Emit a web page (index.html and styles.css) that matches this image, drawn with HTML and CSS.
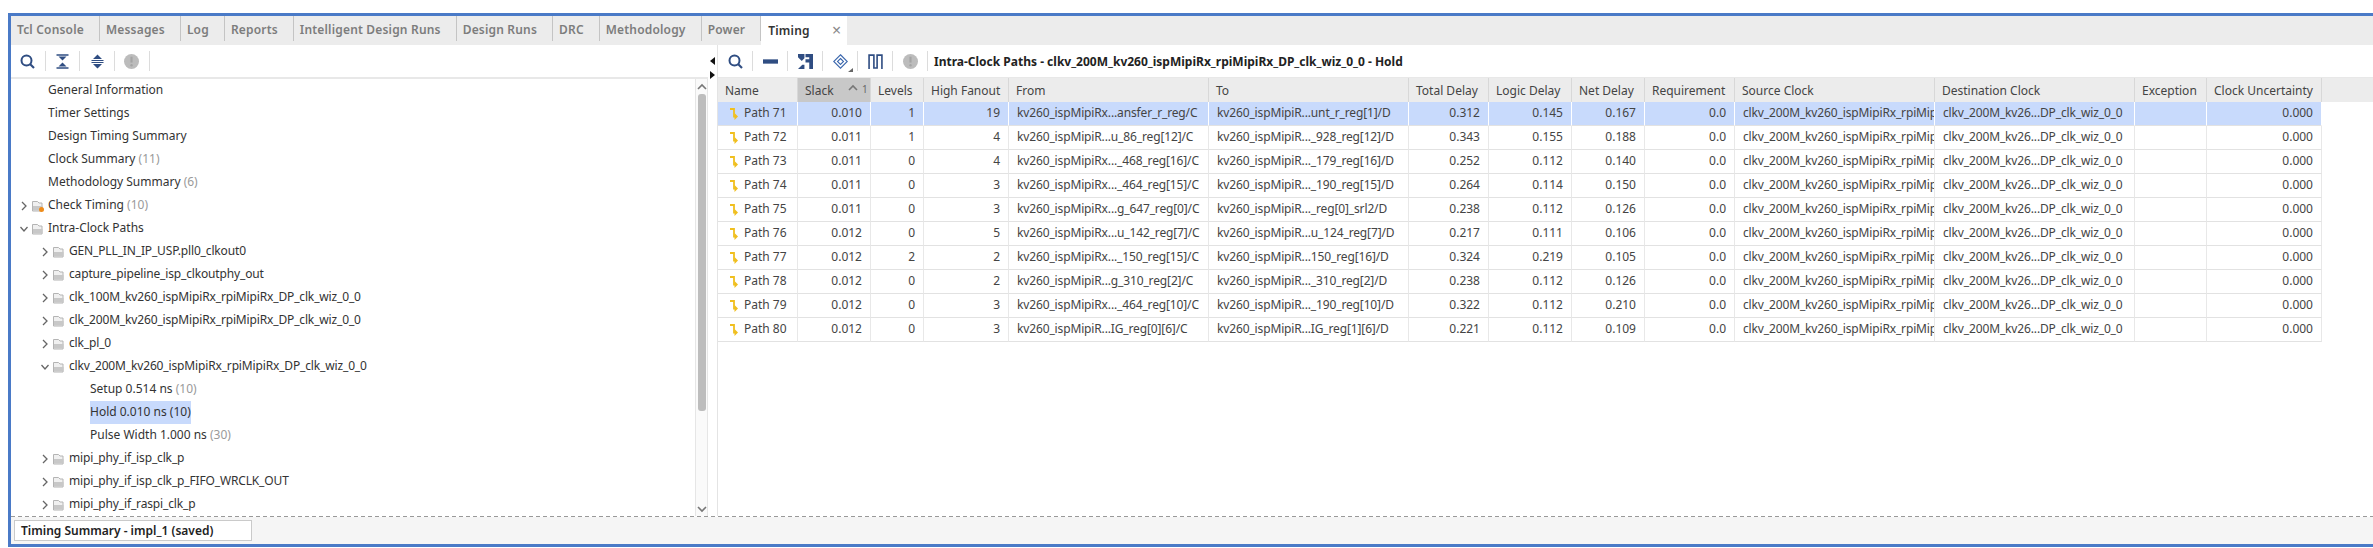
FILE: index.html
```html
<!DOCTYPE html>
<html lang="en">
<head>
    <meta charset="UTF-8">
    <title>Timing Summary - impl_1</title>
    <link rel="stylesheet" href="styles.css">
</head>
<body>
<svg class="defs">
    <defs>
        <symbol id="i-search" viewBox="0 0 15 15"><circle cx="6.500" cy="6.500" r="5" fill="none" stroke="#2f4d82" stroke-width="2"/><path d="M10 10l4 4" stroke="#2f4d82" stroke-width="2.200"/></symbol>
        <symbol id="i-collapse" viewBox="0 0 14 15"><path d="M1 1h12M1 14h12" stroke="#2f4d82" stroke-width="1.600"/><path d="M3 2.500h8L7 6.500zM3 12.500h8L7 8.500z" fill="#2f4d82"/></symbol>
        <symbol id="i-expand" viewBox="0 0 14 15"><path d="M2.500 5L7 .5 11.500 5zM2.500 10L7 14.500 11.500 10z" fill="#2f4d82"/><path d="M1 6.500h12M1 8.500h12" stroke="#2f4d82" stroke-width="1.200"/></symbol>
        <symbol id="i-warn" viewBox="0 0 14 14"><circle cx="7" cy="7" r="7" fill="#bcbcbc"/><path d="M7 2.500v5.500" stroke="#a4a4a4" stroke-width="2"/><circle cx="7" cy="10.500" r="1.100" fill="#a4a4a4"/></symbol>
        <symbol id="i-minus" viewBox="0 0 14 14"><rect x="0" y="5" width="14" height="4" fill="#2f4d82"/></symbol>
        <symbol id="i-route" viewBox="0 0 14 14"><path d="M0 0h6v4L3.500 6.500 0 3zM0 14l4-4 2 0v4zM10.500 0H14v14h-3.500V8H7V5h3.500V3H7V0z" fill="#2f4d82"/></symbol>
        <symbol id="i-diamond" viewBox="0 0 14 14"><path d="M7 .7L13.300 7 7 13.300.7 7z" fill="none" stroke="#3b67ad"/><path d="M7 4.200L9.800 7 7 9.800 4.200 7z" fill="none" stroke="#3b67ad"/></symbol>
        <symbol id="i-wave" viewBox="0 0 14 14"><path d="M1 14V1h4.500v12h3V1H13v13" fill="none" stroke="#2f4d82" stroke-width="1.500"/></symbol>
        <symbol id="i-path" viewBox="0 0 8 12"><path d="M0 1h4v7.500h1.500" fill="none" stroke="#f0bf1f" stroke-width="1.800"/><path d="M4.500 5L8 8.500 4.500 12z" fill="#f0bf1f"/></symbol>
        <symbol id="i-folder" viewBox="0 0 12 12"><path d="M.5 1.500h5l1.500 1.500h3v8h-9.500z" fill="#f0f0f0" stroke="#b4b4b4"/><rect x="1" y="6" width="9.500" height="4.500" fill="#c8c8c8"/></symbol>
        <symbol id="i-open" viewBox="0 0 10 10"><path d="M3 1l4 4-4 4" fill="none" stroke="#666" stroke-width="1.300"/></symbol>
        <symbol id="i-down" viewBox="0 0 10 10"><path d="M1.500 3l3.500 4 3.500-4" fill="none" stroke="#666" stroke-width="1.300"/></symbol>
        <symbol id="i-up" viewBox="0 0 10 10"><path d="M1 7l4-4 4 4" fill="none" stroke="#777" stroke-width="1.600"/></symbol>
        <symbol id="i-dn" viewBox="0 0 10 10"><path d="M1 3l4 4 4-4" fill="none" stroke="#777" stroke-width="1.600"/></symbol>
    </defs>
</svg>

<div class="window">
    <div class="tabs">
        <div class="tab">Tcl Console</div>
        <div class="tab">Messages</div>
        <div class="tab">Log</div>
        <div class="tab">Reports</div>
        <div class="tab">Intelligent Design Runs</div>
        <div class="tab">Design Runs</div>
        <div class="tab">DRC</div>
        <div class="tab">Methodology</div>
        <div class="tab">Power</div>
        <div class="tab tab-active">Timing <span class="tab-close">×</span></div>
    </div>

    <div class="panes">
        <div class="left-pane">
            <div class="toolbar">
                <span class="tool"><svg class="ico"><use href="#i-search"/></svg></span>
                <span class="tool"><svg class="ico"><use href="#i-collapse"/></svg></span>
                <span class="tool"><svg class="ico"><use href="#i-expand"/></svg></span>
                <span class="tool"><svg class="ico"><use href="#i-warn"/></svg></span>
            </div>
            <div class="tree-wrap">
                <ul class="tree">
                    <li class="lvl1"><span class="label">General Information</span></li>
                    <li class="lvl1"><span class="label">Timer Settings</span></li>
                    <li class="lvl1"><span class="label">Design Timing Summary</span></li>
                    <li class="lvl1"><span class="label">Clock Summary <em>(11)</em></span></li>
                    <li class="lvl1"><span class="label">Methodology Summary <em>(6)</em></span></li>
                    <li class="lvl0"><svg class="arrow"><use href="#i-open"/></svg><span class="fold fold-warn"><svg class="folder"><use href="#i-folder"/></svg></span><span class="label">Check Timing <em>(10)</em></span></li>
                    <li class="lvl0"><svg class="arrow"><use href="#i-down"/></svg><span class="fold"><svg class="folder"><use href="#i-folder"/></svg></span><span class="label">Intra-Clock Paths</span></li>
                    <li class="lvl2"><svg class="arrow"><use href="#i-open"/></svg><span class="fold"><svg class="folder"><use href="#i-folder"/></svg></span><span class="label">GEN_PLL_IN_IP_USP.pll0_clkout0</span></li>
                    <li class="lvl2"><svg class="arrow"><use href="#i-open"/></svg><span class="fold"><svg class="folder"><use href="#i-folder"/></svg></span><span class="label">capture_pipeline_isp_clkoutphy_out</span></li>
                    <li class="lvl2"><svg class="arrow"><use href="#i-open"/></svg><span class="fold"><svg class="folder"><use href="#i-folder"/></svg></span><span class="label">clk_100M_kv260_ispMipiRx_rpiMipiRx_DP_clk_wiz_0_0</span></li>
                    <li class="lvl2"><svg class="arrow"><use href="#i-open"/></svg><span class="fold"><svg class="folder"><use href="#i-folder"/></svg></span><span class="label">clk_200M_kv260_ispMipiRx_rpiMipiRx_DP_clk_wiz_0_0</span></li>
                    <li class="lvl2"><svg class="arrow"><use href="#i-open"/></svg><span class="fold"><svg class="folder"><use href="#i-folder"/></svg></span><span class="label">clk_pl_0</span></li>
                    <li class="lvl2"><svg class="arrow"><use href="#i-down"/></svg><span class="fold"><svg class="folder"><use href="#i-folder"/></svg></span><span class="label">clkv_200M_kv260_ispMipiRx_rpiMipiRx_DP_clk_wiz_0_0</span></li>
                    <li class="lvl3"><span class="label">Setup 0.514 ns <em>(10)</em></span></li>
                    <li class="lvl3"><span class="label label-sel">Hold 0.010 ns (10)</span></li>
                    <li class="lvl3"><span class="label">Pulse Width 1.000 ns <em>(30)</em></span></li>
                    <li class="lvl2"><svg class="arrow"><use href="#i-open"/></svg><span class="fold"><svg class="folder"><use href="#i-folder"/></svg></span><span class="label">mipi_phy_if_isp_clk_p</span></li>
                    <li class="lvl2"><svg class="arrow"><use href="#i-open"/></svg><span class="fold"><svg class="folder"><use href="#i-folder"/></svg></span><span class="label">mipi_phy_if_isp_clk_p_FIFO_WRCLK_OUT</span></li>
                    <li class="lvl2"><svg class="arrow"><use href="#i-open"/></svg><span class="fold"><svg class="folder"><use href="#i-folder"/></svg></span><span class="label">mipi_phy_if_raspi_clk_p</span></li>
                </ul>
                <div class="scrollbar">
                    <svg class="sb-arrow"><use href="#i-up"/></svg>
                    <div class="sb-track"><div class="sb-thumb"></div></div>
                    <svg class="sb-arrow"><use href="#i-dn"/></svg>
                </div>
            </div>
        </div>

        <div class="splitter">
            <span class="split-left"></span>
            <span class="split-right"></span>
        </div>

        <div class="right-pane">
            <div class="toolbar">
                <span class="tool"><svg class="ico"><use href="#i-search"/></svg></span>
                <span class="tool"><svg class="ico"><use href="#i-minus"/></svg></span>
                <span class="tool"><svg class="ico"><use href="#i-route"/></svg></span>
                <span class="tool tool-corner"><svg class="ico"><use href="#i-diamond"/></svg></span>
                <span class="tool"><svg class="ico"><use href="#i-wave"/></svg></span>
                <span class="tool"><svg class="ico"><use href="#i-warn"/></svg></span>
                <span class="table-title">Intra-Clock Paths - clkv_200M_kv260_ispMipiRx_rpiMipiRx_DP_clk_wiz_0_0 - Hold</span>
            </div>
            <table class="paths">
                <colgroup>
                    <col class="c-name"><col class="c-slack"><col class="c-levels"><col class="c-fanout">
                    <col class="c-from"><col class="c-to"><col class="c-total"><col class="c-logic">
                    <col class="c-net"><col class="c-req"><col class="c-src"><col class="c-dst">
                    <col class="c-exc"><col class="c-unc"><col>
                </colgroup>
                <thead>
                    <tr>
                        <th>Name</th>
                        <th class="sorted">Slack <span class="sort"><svg class="sort-ico"><use href="#i-up"/></svg><sup>1</sup></span></th>
                        <th>Levels</th><th>High Fanout</th><th>From</th><th>To</th><th>Total Delay</th><th>Logic Delay</th><th>Net Delay</th><th>Requirement</th><th>Source Clock</th><th>Destination Clock</th><th>Exception</th><th>Clock Uncertainty</th><th class="filler"></th>
                    </tr>
                </thead>
                <tbody id="rows"></tbody>
            </table>
        </div>
    </div>

    <div class="dash"></div>
    <div class="status-row">
        <div class="status-tab">Timing Summary - impl_1 (saved)</div>
    </div>
</div>

<script>
    const dados = [
        ["Path 71", "0.010", 1, 19, "kv260_ispMipiRx...ansfer_r_reg/C", "kv260_ispMipiR...unt_r_reg[1]/D", "0.312", "0.145", "0.167"],
        ["Path 72", "0.011", 1, 4, "kv260_ispMipiR...u_86_reg[12]/C", "kv260_ispMipiR..._928_reg[12]/D", "0.343", "0.155", "0.188"],
        ["Path 73", "0.011", 0, 4, "kv260_ispMipiRx..._468_reg[16]/C", "kv260_ispMipiR..._179_reg[16]/D", "0.252", "0.112", "0.140"],
        ["Path 74", "0.011", 0, 3, "kv260_ispMipiRx..._464_reg[15]/C", "kv260_ispMipiR..._190_reg[15]/D", "0.264", "0.114", "0.150"],
        ["Path 75", "0.011", 0, 3, "kv260_ispMipiRx...g_647_reg[0]/C", "kv260_ispMipiR..._reg[0]_srl2/D", "0.238", "0.112", "0.126"],
        ["Path 76", "0.012", 0, 5, "kv260_ispMipiRx...u_142_reg[7]/C", "kv260_ispMipiR...u_124_reg[7]/D", "0.217", "0.111", "0.106"],
        ["Path 77", "0.012", 2, 2, "kv260_ispMipiRx..._150_reg[15]/C", "kv260_ispMipiR...150_reg[16]/D", "0.324", "0.219", "0.105"],
        ["Path 78", "0.012", 0, 2, "kv260_ispMipiR...g_310_reg[2]/C", "kv260_ispMipiR..._310_reg[2]/D", "0.238", "0.112", "0.126"],
        ["Path 79", "0.012", 0, 3, "kv260_ispMipiRx..._464_reg[10]/C", "kv260_ispMipiR..._190_reg[10]/D", "0.322", "0.112", "0.210"],
        ["Path 80", "0.012", 0, 3, "kv260_ispMipiR...IG_reg[0][6]/C", "kv260_ispMipiR...IG_reg[1][6]/D", "0.221", "0.112", "0.109"]
    ];
    const corpo = document.getElementById("rows");
    dados.forEach(function(d, i) {
        const tr = document.createElement("tr");
        if (i === 0) tr.className = "row-sel";
        tr.innerHTML =
            `<td><svg class="path-ico"><use href="#i-path"/></svg>${d[0]}</td>` +
            `<td class="num">${d[1]}</td><td class="num">${d[2]}</td><td class="num">${d[3]}</td>` +
            `<td>${d[4]}</td><td>${d[5]}</td>` +
            `<td class="num">${d[6]}</td><td class="num">${d[7]}</td><td class="num">${d[8]}</td>` +
            `<td class="num">0.0</td>` +
            `<td class="clip">clkv_200M_kv260_ispMipiRx_rpiMip</td>` +
            `<td>clkv_200M_kv26...DP_clk_wiz_0_0</td><td></td><td class="num">0.000</td>`;
        corpo.appendChild(tr);
    });
</script>
</body>
</html>
```

FILE: styles.css
```css
html, body {
    margin: 0;
    padding: 0;
    height: 548px;
    background: #fff;
    overflow: hidden;
}
body {
    font-family: "Noto Sans", "Open Sans", sans-serif;
    font-size: 12px;
    color: #333;
    padding-top: 13px;
    box-sizing: border-box;
}
.defs {
    width: 0;
    height: 0;
    display: block;
}
.window {
    height: 534px;
    margin-left: 8px;
    border-top: 3px solid #4a7ac7;
    border-left: 3px solid #4a7ac7;
    border-bottom: 3px solid #4a7ac7;
    box-sizing: border-box;
    display: flex;
    flex-direction: column;
    background: #fff;
}
.tabs {
    height: 29px;
    flex: none;
    background: #ececec;
    display: flex;
}
.tab {
    height: 25px;
    line-height: 27px;
    padding: 0 15px 0 6px;
    border-right: 1px solid #c4c4c4;
    color: #7d7d7d;
    font-weight: 600;
    letter-spacing: 0.18px;
    white-space: nowrap;
}
.tab-active {
    height: 29px;
    line-height: 28px;
    background: #fff;
    color: #333;
    border-right: none;
    padding: 0 0 0 7px;
    width: 79px;
}
.tab-close {
    color: #8a8a8a;
    font-weight: 400;
    font-size: 16px;
    margin-left: 19px;
    vertical-align: -1px;
}
.panes {
    height: 471px;
    flex: none;
    display: flex;
}
.left-pane {
    width: 697px;
    flex: none;
    display: flex;
    flex-direction: column;
}
.toolbar {
    height: 32px;
    flex: none;
    display: flex;
    align-items: center;
    border-bottom: 2px solid #e8e8e8;
}
.tool {
    width: 34.7px;
    height: 20px;
    display: flex;
    align-items: center;
    justify-content: center;
    border-right: 1px solid #dcdcdc;
    box-sizing: border-box;
    position: relative;
    flex: none;
}
.right-pane .toolbar {
    border-bottom: 1px solid #e8e8e8;
}
.right-pane .tool {
    width: 35px;
}
.ico {
    width: 15px;
    height: 15px;
}
.tool-corner::after {
    content: "";
    position: absolute;
    right: 4px;
    bottom: -1px;
    border-left: 5px solid transparent;
    border-bottom: 4px solid #666;
}
.tree-wrap {
    flex: 1;
    display: flex;
    min-height: 0;
}
.tree {
    list-style: none;
    margin: 0;
    padding: 0;
    flex: 1;
    overflow: hidden;
}
.tree li {
    height: 23px;
    display: flex;
    align-items: center;
    white-space: nowrap;
}
.lvl0 { padding-left: 8px; }
.lvl1 { padding-left: 37px; }
.lvl2 { padding-left: 29px; letter-spacing: -0.15px; }
.lvl3 { padding-left: 79px; }
.arrow {
    width: 10px;
    height: 10px;
    flex: none;
    margin-right: 3px;
}
.fold {
    width: 12px;
    height: 12px;
    margin-right: 4px;
    position: relative;
    flex: none;
}
.folder {
    width: 12px;
    height: 12px;
    display: block;
}
.fold-warn::after {
    content: "";
    position: absolute;
    right: 0;
    bottom: 0;
    width: 5px;
    height: 5px;
    border-radius: 50%;
    background: #ef8c1a;
}
.label {
    display: block;
    line-height: 21px;
    padding-bottom: 2px;
}
.label em {
    font-style: normal;
    color: #9a9a9a;
}
.label-sel {
    background: #c8dafc;
}
.scrollbar {
    width: 13px;
    flex: none;
    box-sizing: border-box;
    border-left: 1px solid #e6e6e6;
    border-right: 1px solid #e6e6e6;
    background: #fafafa;
    display: flex;
    flex-direction: column;
    align-items: center;
}
.sb-arrow {
    width: 10px;
    height: 10px;
    flex: none;
    margin: 3px 0 2px;
}
.sb-track {
    flex: 1;
}
.sb-thumb {
    height: 317px;
    width: 8px;
    background: #bdbdbd;
    border-radius: 3px;
}
.splitter {
    width: 9px;
    flex: none;
    position: relative;
}
.split-left, .split-right {
    position: absolute;
    left: 2px;
    border-top: 4px solid transparent;
    border-bottom: 4px solid transparent;
}
.split-left {
    top: 12px;
    border-right: 5px solid #111;
}
.split-right {
    top: 26px;
    border-left: 5px solid #111;
}
.right-pane {
    flex: 1;
    min-width: 0;
    border-left: 1px solid #e4e4e4;
    overflow: hidden;
}
.table-title {
    font-weight: 700;
    color: #222;
    margin-left: 6px;
    white-space: nowrap;
}
.paths {
    border-collapse: separate;
    border-spacing: 0;
    table-layout: fixed;
    width: 1655px;
}
.c-name { width: 80px; }
.c-slack { width: 73px; }
.c-levels { width: 53px; }
.c-fanout { width: 85px; }
.c-from { width: 200px; }
.c-to { width: 200px; }
.c-total { width: 80px; }
.c-logic { width: 83px; }
.c-net { width: 73px; }
.c-req { width: 90px; }
.c-src { width: 200px; }
.c-dst { width: 200px; }
.c-exc { width: 72px; }
.c-unc { width: 115px; }
.paths th {
    height: 24px;
    background: #ececec;
    color: #444;
    font-weight: 400;
    text-align: left;
    padding: 0 0 0 7px;
    border-right: 1px solid #d8d8d8;
    box-sizing: border-box;
    overflow: hidden;
    white-space: nowrap;
    position: relative;
}
.paths th.filler {
    border-right: none;
}
.paths th.sorted {
    background: #c8c8c8;
}
.sort {
    position: absolute;
    left: 50px;
    top: 5px;
    display: flex;
    color: #666;
    font-size: 10px;
    line-height: 12px;
}
.sort sup {
    vertical-align: baseline;
    font-size: 10px;
    margin-left: 4px;
}
.sort-ico {
    width: 10px;
    height: 10px;
}
.paths td {
    height: 24px;
    padding: 0 8px 2px;
    color: #444;
    letter-spacing: -0.14px;
    border-right: 1px solid #e8e8e8;
    border-bottom: 1px solid #e2e2e2;
    box-sizing: border-box;
    white-space: nowrap;
    overflow: hidden;
}
.paths td:first-child {
    padding-left: 12px;
    letter-spacing: 0;
}
.paths .num {
    text-align: right;
    letter-spacing: 0;
}
.paths .clip {
    padding-right: 0;
}
.row-sel td {
    background: #c8dafc;
    border-right-color: #fff;
}
.path-ico {
    width: 8px;
    height: 12px;
    margin-right: 6px;
    vertical-align: -3px;
}
.dash {
    height: 1px;
    flex: none;
    background: repeating-linear-gradient(to right, #999 0 4px, transparent 4px 7px);
}
.status-row {
    height: 27px;
    flex: none;
    padding: 3px 0 0 3px;
    box-sizing: border-box;
    background: #f5f5f5;
}
.status-tab {
    width: 238px;
    height: 21px;
    line-height: 19px;
    background: #fff;
    border: 1px solid #cacaca;
    box-sizing: border-box;
    padding-left: 6px;
    font-weight: 600;
    color: #222;
    white-space: nowrap;
    overflow: hidden;
}
```
